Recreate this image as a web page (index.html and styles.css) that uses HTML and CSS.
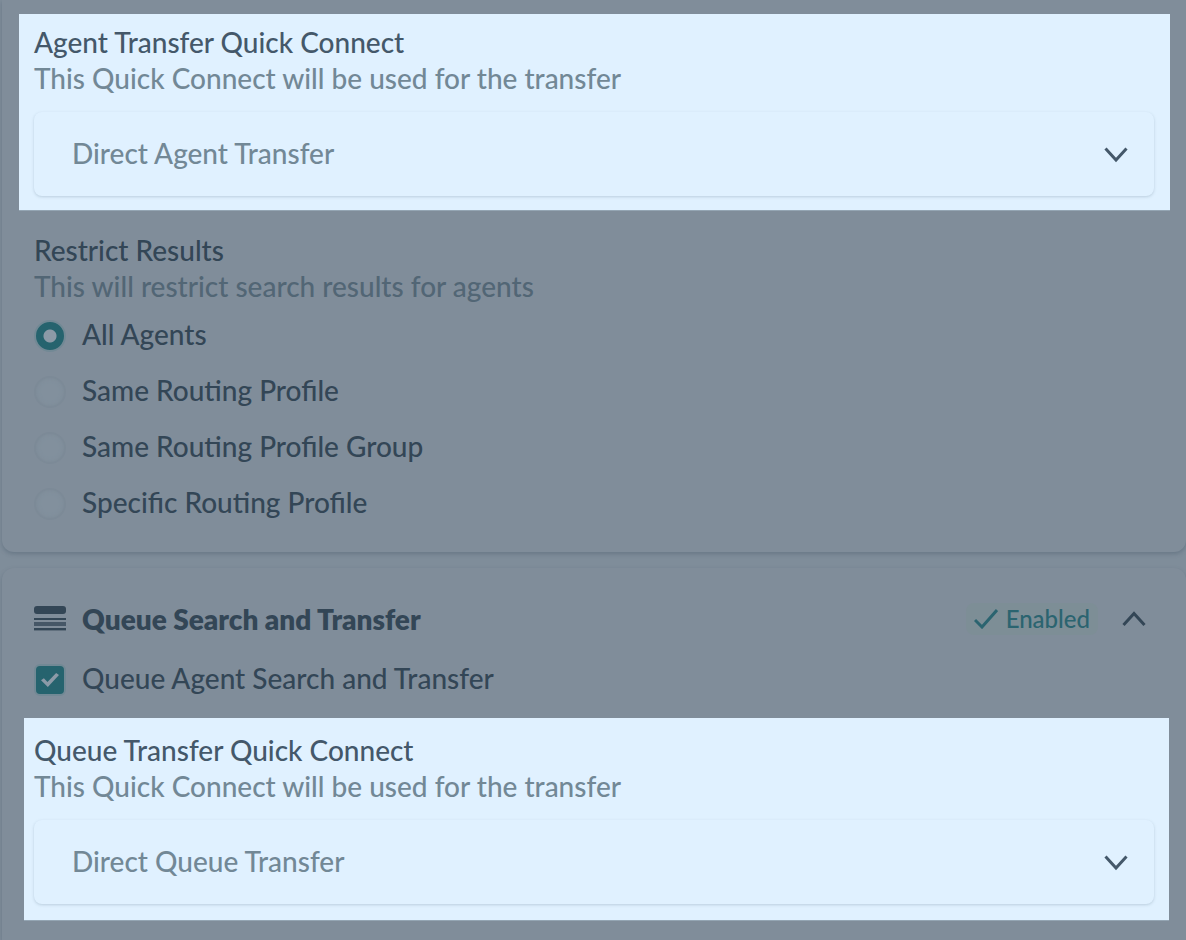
FILE: index.html
```html
<!DOCTYPE html>
<html lang="en">
<head>
    <meta charset="UTF-8">
    <meta name="viewport" content="width=device-width, initial-scale=1.0">
    <title>Transfer Settings</title>
    <link rel="stylesheet" href="styles.css">
</head>
<body>
    <main class="settings">
        <section class="card card-agent">
            <div class="highlight">
                <label class="field-title" for="agent-connect">Agent Transfer Quick Connect</label>
                <p class="field-help">This Quick Connect will be used for the transfer</p>
                <div class="select-box">
                    <select id="agent-connect">
                        <option>Direct Agent Transfer</option>
                    </select>
                    <svg class="chevron" viewBox="0 0 24 16" aria-hidden="true"><path d="M1.5 1.5L12 13L22.5 1.5"/></svg>
                </div>
            </div>

            <fieldset class="restrict">
                <legend class="field-title">Restrict Results</legend>
                <p class="field-help">This will restrict search results for agents</p>
                <div class="options">
                    <label class="option"><input type="radio" name="restrict" checked> All Agents</label>
                    <label class="option"><input type="radio" name="restrict"> Same Routing Profile</label>
                    <label class="option"><input type="radio" name="restrict"> Same Routing Profile Group</label>
                    <label class="option"><input type="radio" name="restrict"> Specific Routing Profile</label>
                </div>
            </fieldset>
        </section>

        <section class="card card-queue">
            <header class="card-header">
                <svg class="queue-icon" viewBox="0 0 32 26" aria-hidden="true">
                    <rect x="0" y="0" width="32" height="8" rx="3"/>
                    <rect x="0" y="12" width="32" height="2"/>
                    <rect x="0" y="16" width="32" height="4" opacity="0.75"/>
                    <rect x="0" y="22" width="32" height="2"/>
                    <rect x="0" y="24" width="32" height="1" opacity="0.4"/>
                </svg>
                <h2>Queue Search and Transfer</h2>
                <span class="badge">
                    <svg class="tick" viewBox="0 0 24 20" aria-hidden="true"><path d="M1 11L8 18L23 1"/></svg>
                    Enabled
                </span>
                <button class="toggle" type="button" aria-label="Collapse">
                    <svg class="chevron-up" viewBox="0 0 24 16" aria-hidden="true"><path d="M1.5 14L12 2.5L22.5 14"/></svg>
                </button>
            </header>

            <label class="option"><input type="checkbox" checked> Queue Agent Search and Transfer</label>

            <div class="highlight highlight-queue">
                <label class="field-title" for="queue-connect">Queue Transfer Quick Connect</label>
                <p class="field-help">This Quick Connect will be used for the transfer</p>
                <div class="select-box">
                    <select id="queue-connect">
                        <option>Direct Queue Transfer</option>
                    </select>
                    <svg class="chevron" viewBox="0 0 24 16" aria-hidden="true"><path d="M1.5 1.5L12 13L22.5 1.5"/></svg>
                </div>
            </div>
        </section>
    </main>
</body>
</html>
```
FILE: styles.css
```css
* {
    box-sizing: border-box;
}

body {
    margin: 0;
    background: #7f8d9a;
    color: #334656;
    font-family: Lato, "Open Sans", sans-serif;
    font-size: 28px;
    font-weight: 500;
    line-height: 36px;
}

p,
h2 {
    margin: 0;
}

.settings {
    display: flex;
    flex-direction: column;
    gap: 16px;
    padding-left: 2px;
}

.card {
    padding: 32px;
    background: #808d9a;
    border-radius: 12px;
    box-shadow: 0 2px 4px rgba(70, 88, 105, 0.4);
}

.card-agent {
    padding-top: 14px;
    border-top-left-radius: 0;
    border-top-right-radius: 0;
}

.card-queue {
    padding-bottom: 20px;
    border-bottom-left-radius: 0;
    border-bottom-right-radius: 0;
}

/* lit areas */
.highlight {
    margin: 0 -16px 0 -15px;
    padding: 10px 16px 14px 15px;
    background: #e0f1ff;
    color: #44586a;
    box-shadow: 0 1px 0 #94a5b3;
}

.field-title {
    display: block;
    padding: 0;
}

.field-help {
    color: #526675;
}

.highlight .field-help {
    color: #728896;
}

.select-box {
    position: relative;
    margin-top: 16px;
}

.select-box select {
    display: block;
    width: 100%;
    height: 84px;
    padding: 0 72px 2px 38px;
    appearance: none;
    background: #e0f1ff;
    border: 0;
    border-radius: 8px;
    box-shadow: 0 1px 3px rgba(100, 125, 145, 0.3);
    color: #728896;
    font: inherit;
}

.chevron,
.chevron-up {
    width: 24px;
    height: 16px;
    fill: none;
    stroke: #44586a;
    stroke-width: 3;
}

.chevron {
    position: absolute;
    top: 35px;
    right: 26px;
    pointer-events: none;
}

.chevron-up {
    display: block;
    stroke: #334656;
}

.restrict {
    margin: 22px 0 0;
    padding: 0;
    border: 0;
}

.options {
    display: flex;
    flex-direction: column;
    gap: 24px;
    margin-top: 16px;
}

.option {
    display: flex;
    align-items: flex-start;
    gap: 16px;
    height: 32px;
    line-height: 28px;
}

.option input {
    display: grid;
    place-content: center;
    width: 32px;
    height: 32px;
    margin: 0;
    appearance: none;
    border: 2px solid #7c8a97;
    background: #82909d;
    box-shadow: inset 0 0 4px #7c8a97;
}

.option input[type="radio"] {
    border-radius: 50%;
}

.option input[type="radio"]:checked {
    border-color: #728995;
    background: radial-gradient(circle, #8c9aa7 6px, #26636e 7px);
    box-shadow: none;
}

.option input[type="checkbox"] {
    border-radius: 6px;
}

.option input[type="checkbox"]:checked {
    border-color: #728995;
    background: #26636e;
    box-shadow: none;
}

.option input[type="checkbox"]:checked::before {
    content: "";
    width: 18px;
    height: 14px;
    background: #8c9aa7;
    clip-path: polygon(0 52%, 16% 38%, 36% 64%, 84% 0, 100% 14%, 38% 100%);
}

.card-header {
    display: flex;
    align-items: center;
    height: 38px;
    margin-bottom: 26px;
}

.queue-icon {
    width: 32px;
    height: 26px;
    margin-right: 16px;
    fill: #334656;
}

.card-header h2 {
    font-size: 28px;
    font-weight: 800;
}

.badge {
    display: flex;
    align-items: center;
    gap: 8px;
    height: 32px;
    margin-left: auto;
    padding: 0 8px;
    background: #7d8e96;
    border-radius: 8px;
    color: #2b6470;
    font-size: 24px;
}

.tick {
    width: 24px;
    height: 20px;
    fill: none;
    stroke: #2b6470;
    stroke-width: 3;
}

.toggle {
    margin-left: 16px;
    padding: 12px 8px;
    border: 0;
    background: none;
}

.highlight-queue {
    margin: 22px -15px 0 -10px;
    padding: 14px 15px 16px 10px;
}
```
